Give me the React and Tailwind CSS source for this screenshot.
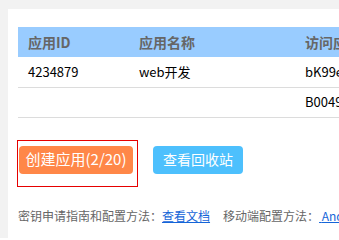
import React from "react";

const font = { fontFamily: '"Noto Sans CJK SC", "Noto Sans", sans-serif' };

export default function App() {
  return (
    <div
      className="w-[339px] h-[238px] overflow-hidden bg-[#f2f2f2] pl-2 pt-[9px]"
      style={font}
    >
      <div className="h-full bg-white pl-[10px] pt-[18px] overflow-hidden">
        <table className="w-[420px] table-fixed border-collapse">
          <colgroup>
            <col className="w-[111px]" />
            <col className="w-[166px]" />
            <col className="w-[143px]" />
          </colgroup>
          <thead>
            <tr className="h-[30px] bg-[#99ccff] text-left text-[14px] font-bold text-[#666]">
              <th className="pl-[10px] font-bold">应用ID</th>
              <th className="pl-[10px] font-bold">应用名称</th>
              <th className="pl-[10px] font-bold whitespace-nowrap">访问应用AK</th>
            </tr>
          </thead>
          <tbody className="text-[13px] text-black">
            <tr className="h-[30px] border-b border-[#dcdcdc]">
              <td className="pl-[10px]">4234879</td>
              <td className="pl-[10px]">web开发</td>
              <td className="pl-[10px] whitespace-nowrap">bK99eGhT2kQp</td>
            </tr>
            <tr className="h-[30px] border-b border-[#dcdcdc]">
              <td className="pl-[10px]"></td>
              <td className="pl-[10px]"></td>
              <td className="pl-[10px] whitespace-nowrap">B0049sLmX7aR</td>
            </tr>
          </tbody>
        </table>

        <div className="mt-[22px] flex items-start">
          <div className="-ml-px h-[47px] w-[121px] border border-[#e60000] pl-px pt-[5px]">
            <button className="flex h-[28px] w-[114px] items-center justify-center rounded-[4px] bg-[#ff8748] text-[15px] text-white">
              创建应用(2/20)
            </button>
          </div>
          <button className="ml-[15px] mt-[6px] flex h-[28px] w-[90px] items-center justify-center rounded-[4px] bg-[#4dc0fd] text-[14px] text-white">
            查看回收站
          </button>
        </div>

        <div className="mt-[20px] whitespace-nowrap text-[12px] leading-[18px] text-[#666]">
          密钥申请指南和配置方法：
          <a href="#" className="text-[#1565d8] underline">
            查看文档
          </a>
          <span className="ml-[13px]">移动端配置方法：</span>
          <a href="#" className="text-[#1565d8] underline">
            {" "}Android SDK
          </a>
        </div>
      </div>
    </div>
  );
}
